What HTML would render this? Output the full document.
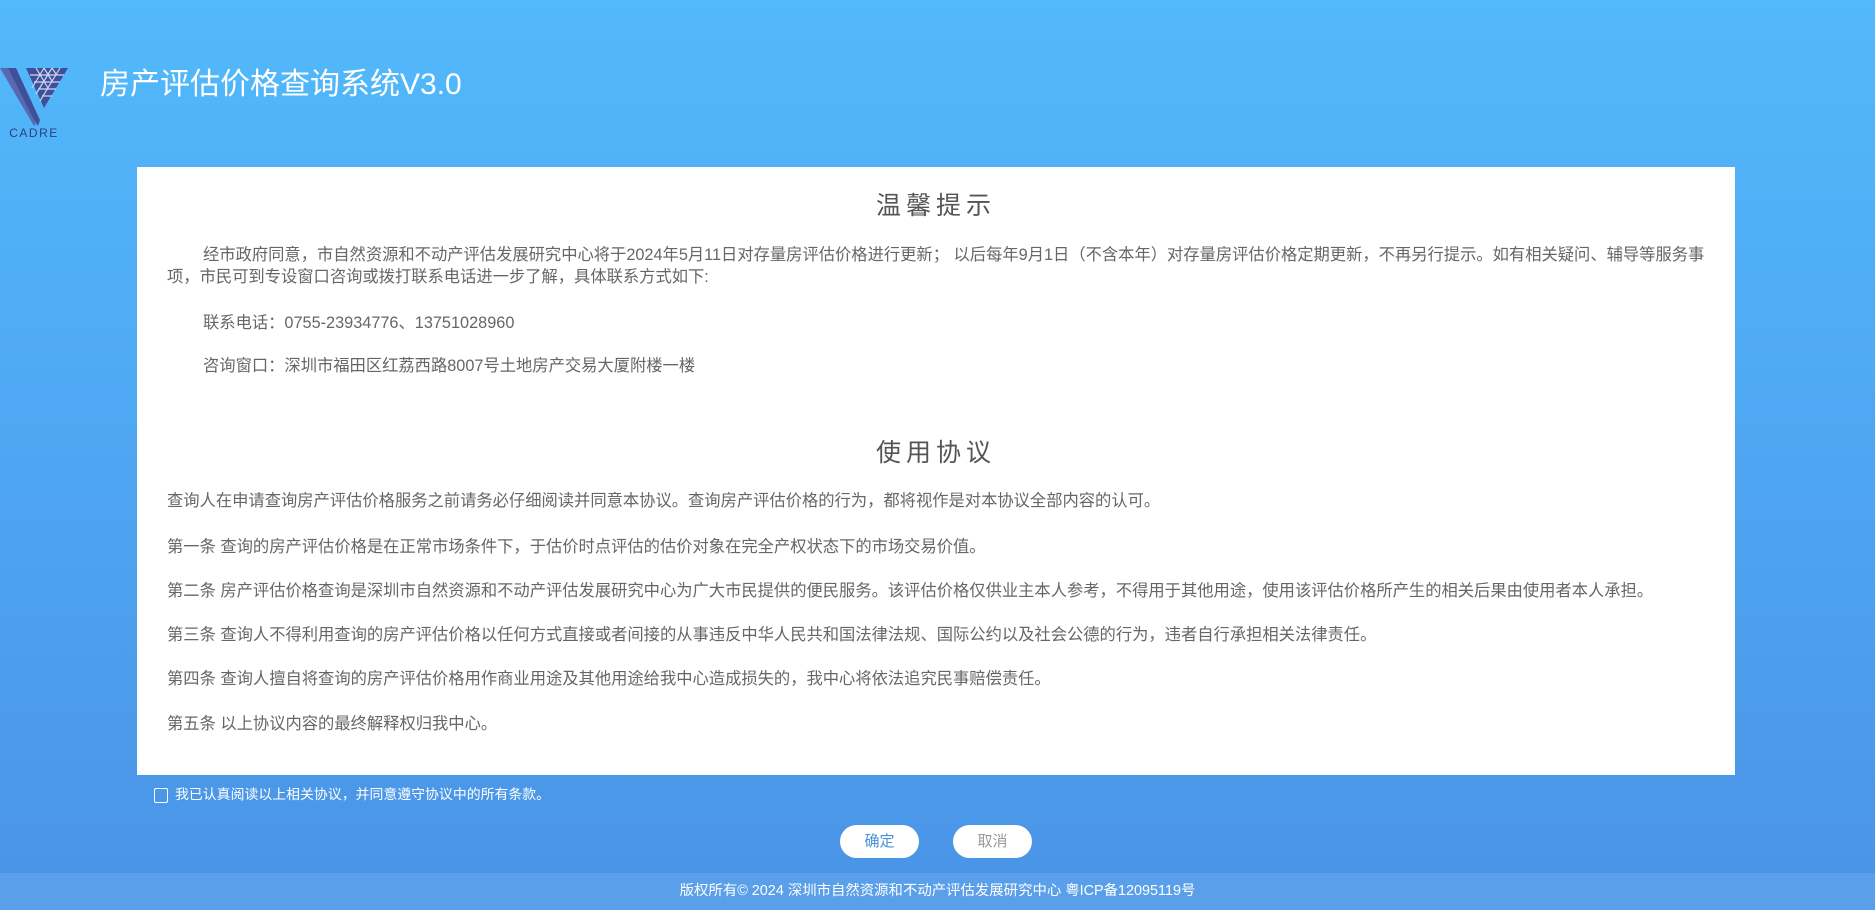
<!DOCTYPE html>
<html><head><meta charset="utf-8"><style>
*{margin:0;padding:0;box-sizing:border-box}
html,body{width:1875px;height:910px;overflow:hidden}
body{background:linear-gradient(180deg,#52b9fb 0%,#4fa8f3 45%,#4a93e6 100%);font-family:"Liberation Sans","Noto Sans CJK SC",sans-serif;position:relative}
.t{position:absolute;white-space:nowrap}
#title{left:100px;top:67px;font-size:30px;color:#fff;line-height:36px}
#panel{position:absolute;left:137px;top:167px;width:1598px;height:608px;background:#fff}
#panel .t{color:#666;font-size:16.3px;line-height:20px}
#panel .h{font-size:25px;letter-spacing:5px;color:#555;line-height:30px;left:0;width:1598px;text-align:center}
.btn{position:absolute;top:825px;width:79px;height:33px;border-radius:17px;background:#fff;font-size:15px;line-height:33px;text-align:center}
#foot{position:absolute;left:0;top:873px;width:1875px;height:37px;background:#5a9fea;color:#fff;font-size:14.4px;line-height:37px;text-align:center}
</style></head><body>
<svg style="position:absolute;left:0;top:64px" width="70" height="76" viewBox="0 0 70 76">
<polygon points="0,4 16,4 40,56 38,62" fill="#3f4f9a"/>
<polygon points="0,4 8,4 36,60 34,62" fill="#5a68b0"/>
<polygon points="26,4 68,4 44,44" fill="#3f4f9a"/>
<g stroke="#cfd8f0" stroke-width="1.2" fill="none">
<line x1="30" y1="11" x2="64" y2="11"/><line x1="34" y1="18" x2="60" y2="18"/><line x1="38" y1="25" x2="56" y2="25"/><line x1="42" y1="32" x2="52" y2="32"/>
<line x1="36" y1="4" x2="48" y2="24"/><line x1="44" y1="4" x2="52" y2="17"/><line x1="52" y1="4" x2="56" y2="10"/>
<line x1="60" y1="4" x2="40" y2="37"/><line x1="52" y1="4" x2="36" y2="30"/><line x1="44" y1="4" x2="32" y2="24"/>
</g>
<text x="34" y="73" font-size="12" fill="#2d3c80" text-anchor="middle" font-family="Liberation Sans" letter-spacing="1.5">CADRE</text>
</svg>
<div class="t" id="title">房产评估价格查询系统V3.0</div>
<div id="panel">
<div class="t h" style="top:24px">温馨提示</div>
<div class="t" style="left:66px;top:78px">经市政府同意，市自然资源和不动产评估发展研究中心将于2024年5月11日对存量房评估价格进行更新； 以后每年9月1日（不含本年）对存量房评估价格定期更新，不再另行提示。如有相关疑问、辅导等服务事</div>
<div class="t" style="left:30px;top:100px">项，市民可到专设窗口咨询或拨打联系电话进一步了解，具体联系方式如下:</div>
<div class="t" style="left:66px;top:146px">联系电话：0755-23934776、13751028960</div>
<div class="t" style="left:66px;top:189px">咨询窗口：深圳市福田区红荔西路8007号土地房产交易大厦附楼一楼</div>
<div class="t h" style="top:271px">使用协议</div>
<div class="t" style="left:30px;top:324px">查询人在申请查询房产评估价格服务之前请务必仔细阅读并同意本协议。查询房产评估价格的行为，都将视作是对本协议全部内容的认可。</div>
<div class="t" style="left:30px;top:370px">第一条 查询的房产评估价格是在正常市场条件下，于估价时点评估的估价对象在完全产权状态下的市场交易价值。</div>
<div class="t" style="left:30px;top:414px">第二条 房产评估价格查询是深圳市自然资源和不动产评估发展研究中心为广大市民提供的便民服务。该评估价格仅供业主本人参考，不得用于其他用途，使用该评估价格所产生的相关后果由使用者本人承担。</div>
<div class="t" style="left:30px;top:458px">第三条 查询人不得利用查询的房产评估价格以任何方式直接或者间接的从事违反中华人民共和国法律法规、国际公约以及社会公德的行为，违者自行承担相关法律责任。</div>
<div class="t" style="left:30px;top:502px">第四条 查询人擅自将查询的房产评估价格用作商业用途及其他用途给我中心造成损失的，我中心将依法追究民事赔偿责任。</div>
<div class="t" style="left:30px;top:547px">第五条 以上协议内容的最终解释权归我中心。</div>
</div>
<div style="position:absolute;left:154px;top:788px;width:14px;height:15px;border:1.5px solid #fff;border-radius:2px"></div>
<div class="t" style="left:175px;top:785px;color:#fff;font-size:13.9px;line-height:18px">我已认真阅读以上相关协议，并同意遵守协议中的所有条款。</div>
<div class="btn" style="left:840px;color:#4a8fdc">确定</div>
<div class="btn" style="left:953px;color:#999">取消</div>
<div id="foot">版权所有© 2024 深圳市自然资源和不动产评估发展研究中心 粤ICP备12095119号</div>
</body></html>
